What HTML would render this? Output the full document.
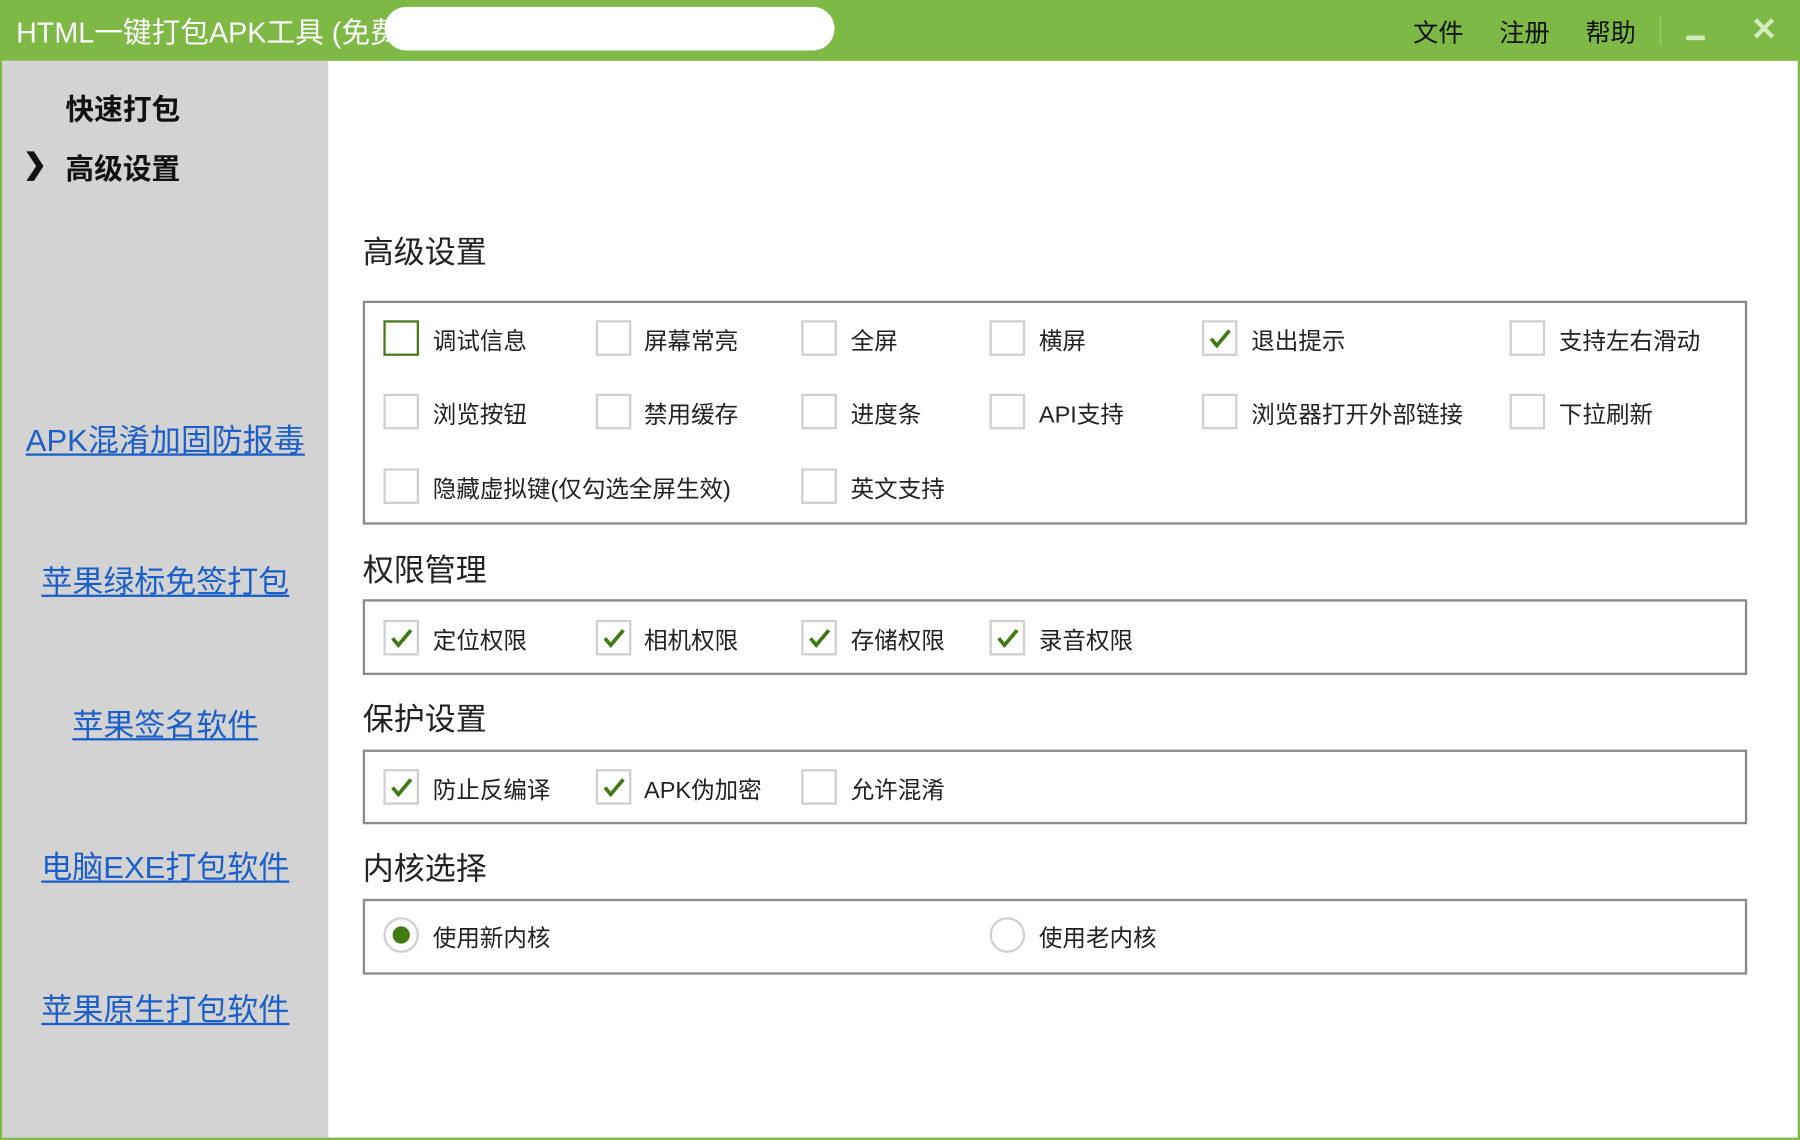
<!DOCTYPE html>
<html><head><meta charset="utf-8"><style>
*{margin:0;padding:0;box-sizing:border-box}
html,body{width:1800px;height:1140px;overflow:hidden;background:#fff}
#w{position:absolute;left:0;top:0;width:1568px;height:993px;transform:scale(1.14796);transform-origin:0 0;font-family:"Liberation Sans","Noto Sans CJK SC",sans-serif;background:#fff}
.a{position:absolute;white-space:nowrap}
#tb{position:absolute;left:0;top:0;width:1568px;height:53px;background:#7db944}
#sb{position:absolute;left:2px;top:53px;width:284px;height:938px;background:#d3d3d3}
.t{color:#fff;font-size:25px;left:14px;top:9px}
.m{color:#111;font-size:22px;top:11px}
.nav{font-size:25px;font-weight:bold;color:#111}
.lk{color:#1b5fc8;font-size:27px;text-decoration:underline;left:2px;width:284px;text-align:center}
.h{font-size:27px;color:#222;left:316px}
.box{position:absolute;left:316px;width:1206px;border:2px solid #8a8a8a}
.cb{position:absolute;width:31px;height:31px;border:2px solid #d0d0d0;background:#fff}
.cb.g{border-color:#4a7a1e}
.cb svg{position:absolute;left:3px;top:3px}
.l{font-size:20.5px;color:#222}
.rd{position:absolute;width:31px;height:31px;border:2px solid #d0d0d0;border-radius:50%}
.rd i{position:absolute;left:6px;top:6px;width:15px;height:15px;border-radius:50%;background:#3f7a12}
</style></head><body><div id="w">
<div id="tb"></div>
<div class="a" style="left:0;top:0;width:2px;height:993px;background:#7db944"></div>
<div class="a" style="left:1566px;top:0;width:2px;height:993px;background:#7db944"></div>
<div class="a" style="left:0;top:991px;width:1568px;height:2px;background:#7db944"></div>
<div class="a t">HTML一键打包APK工具 (免费版 联系方式 QQ:123456)</div>
<div class="a" style="left:335px;top:6px;width:392px;height:38px;background:#fff;border-radius:19px"></div>
<div class="a m" style="left:1231px">文件</div>
<div class="a m" style="left:1306px">注册</div>
<div class="a m" style="left:1381px">帮助</div>
<div class="a" style="left:1446px;top:14px;width:1px;height:26px;background:#9fd070"></div>
<div class="a" style="left:1469px;top:31px;width:16px;height:4px;background:#d5eec0"></div>
<div class="a" style="left:1525px;top:9px;font-size:28px;font-weight:bold;color:#d5eec0">✕</div>
<div id="sb"></div>
<div class="a nav" style="left:57px;top:76px">快速打包</div>
<div class="a nav" style="left:20px;top:128px">❯</div>
<div class="a nav" style="left:57px;top:128px">高级设置</div>
<div class="a lk" style="top:362px">APK混淆加固防报毒</div>
<div class="a lk" style="top:485px">苹果绿标免签打包</div>
<div class="a lk" style="top:610px">苹果签名软件</div>
<div class="a lk" style="top:734px">电脑EXE打包软件</div>
<div class="a lk" style="top:858px">苹果原生打包软件</div>

<div class="a h" style="top:198px">高级设置</div>
<div class="box" style="top:262px;height:195px"></div>
<div class="a h" style="top:475px">权限管理</div>
<div class="box" style="top:522px;height:66px"></div>
<div class="a h" style="top:605px">保护设置</div>
<div class="box" style="top:653px;height:65px"></div>
<div class="a h" style="top:735px">内核选择</div>
<div class="box" style="top:783px;height:66px"></div>

<div class="cb g" style="left:334px;top:279px"></div><div class="a l" style="left:377px;top:280px">调试信息</div>
<div class="cb" style="left:519px;top:279px"></div><div class="a l" style="left:561px;top:280px">屏幕常亮</div>
<div class="cb" style="left:698px;top:279px"></div><div class="a l" style="left:741px;top:280px">全屏</div>
<div class="cb" style="left:862px;top:279px"></div><div class="a l" style="left:905px;top:280px">横屏</div>
<div class="cb" style="left:1047px;top:279px"><svg width="22" height="22" viewBox="0 0 22 22"><path d="M3 11l5 6L19 4" stroke="#3f7a12" stroke-width="3.2" fill="none"/></svg></div><div class="a l" style="left:1090px;top:280px">退出提示</div>
<div class="cb" style="left:1315px;top:279px"></div><div class="a l" style="left:1358px;top:280px">支持左右滑动</div>
<div class="cb" style="left:334px;top:343px"></div><div class="a l" style="left:377px;top:344px">浏览按钮</div>
<div class="cb" style="left:519px;top:343px"></div><div class="a l" style="left:561px;top:344px">禁用缓存</div>
<div class="cb" style="left:698px;top:343px"></div><div class="a l" style="left:741px;top:344px">进度条</div>
<div class="cb" style="left:862px;top:343px"></div><div class="a l" style="left:905px;top:344px">API支持</div>
<div class="cb" style="left:1047px;top:343px"></div><div class="a l" style="left:1090px;top:344px">浏览器打开外部链接</div>
<div class="cb" style="left:1315px;top:343px"></div><div class="a l" style="left:1358px;top:344px">下拉刷新</div>
<div class="cb" style="left:334px;top:408px"></div><div class="a l" style="left:377px;top:409px">隐藏虚拟键(仅勾选全屏生效)</div>
<div class="cb" style="left:698px;top:408px"></div><div class="a l" style="left:741px;top:409px">英文支持</div>
<div class="cb" style="left:334px;top:540px"><svg width="22" height="22" viewBox="0 0 22 22"><path d="M3 11l5 6L19 4" stroke="#3f7a12" stroke-width="3.2" fill="none"/></svg></div><div class="a l" style="left:377px;top:541px">定位权限</div>
<div class="cb" style="left:519px;top:540px"><svg width="22" height="22" viewBox="0 0 22 22"><path d="M3 11l5 6L19 4" stroke="#3f7a12" stroke-width="3.2" fill="none"/></svg></div><div class="a l" style="left:561px;top:541px">相机权限</div>
<div class="cb" style="left:698px;top:540px"><svg width="22" height="22" viewBox="0 0 22 22"><path d="M3 11l5 6L19 4" stroke="#3f7a12" stroke-width="3.2" fill="none"/></svg></div><div class="a l" style="left:741px;top:541px">存储权限</div>
<div class="cb" style="left:862px;top:540px"><svg width="22" height="22" viewBox="0 0 22 22"><path d="M3 11l5 6L19 4" stroke="#3f7a12" stroke-width="3.2" fill="none"/></svg></div><div class="a l" style="left:905px;top:541px">录音权限</div>
<div class="cb" style="left:334px;top:670px"><svg width="22" height="22" viewBox="0 0 22 22"><path d="M3 11l5 6L19 4" stroke="#3f7a12" stroke-width="3.2" fill="none"/></svg></div><div class="a l" style="left:377px;top:671px">防止反编译</div>
<div class="cb" style="left:519px;top:670px"><svg width="22" height="22" viewBox="0 0 22 22"><path d="M3 11l5 6L19 4" stroke="#3f7a12" stroke-width="3.2" fill="none"/></svg></div><div class="a l" style="left:561px;top:671px">APK伪加密</div>
<div class="cb" style="left:698px;top:670px"></div><div class="a l" style="left:741px;top:671px">允许混淆</div>
<div class="rd" style="left:334px;top:799px"><i></i></div><div class="a l" style="left:377px;top:800px">使用新内核</div>
<div class="rd" style="left:862px;top:799px"></div><div class="a l" style="left:905px;top:800px">使用老内核</div>
</div></body></html>
